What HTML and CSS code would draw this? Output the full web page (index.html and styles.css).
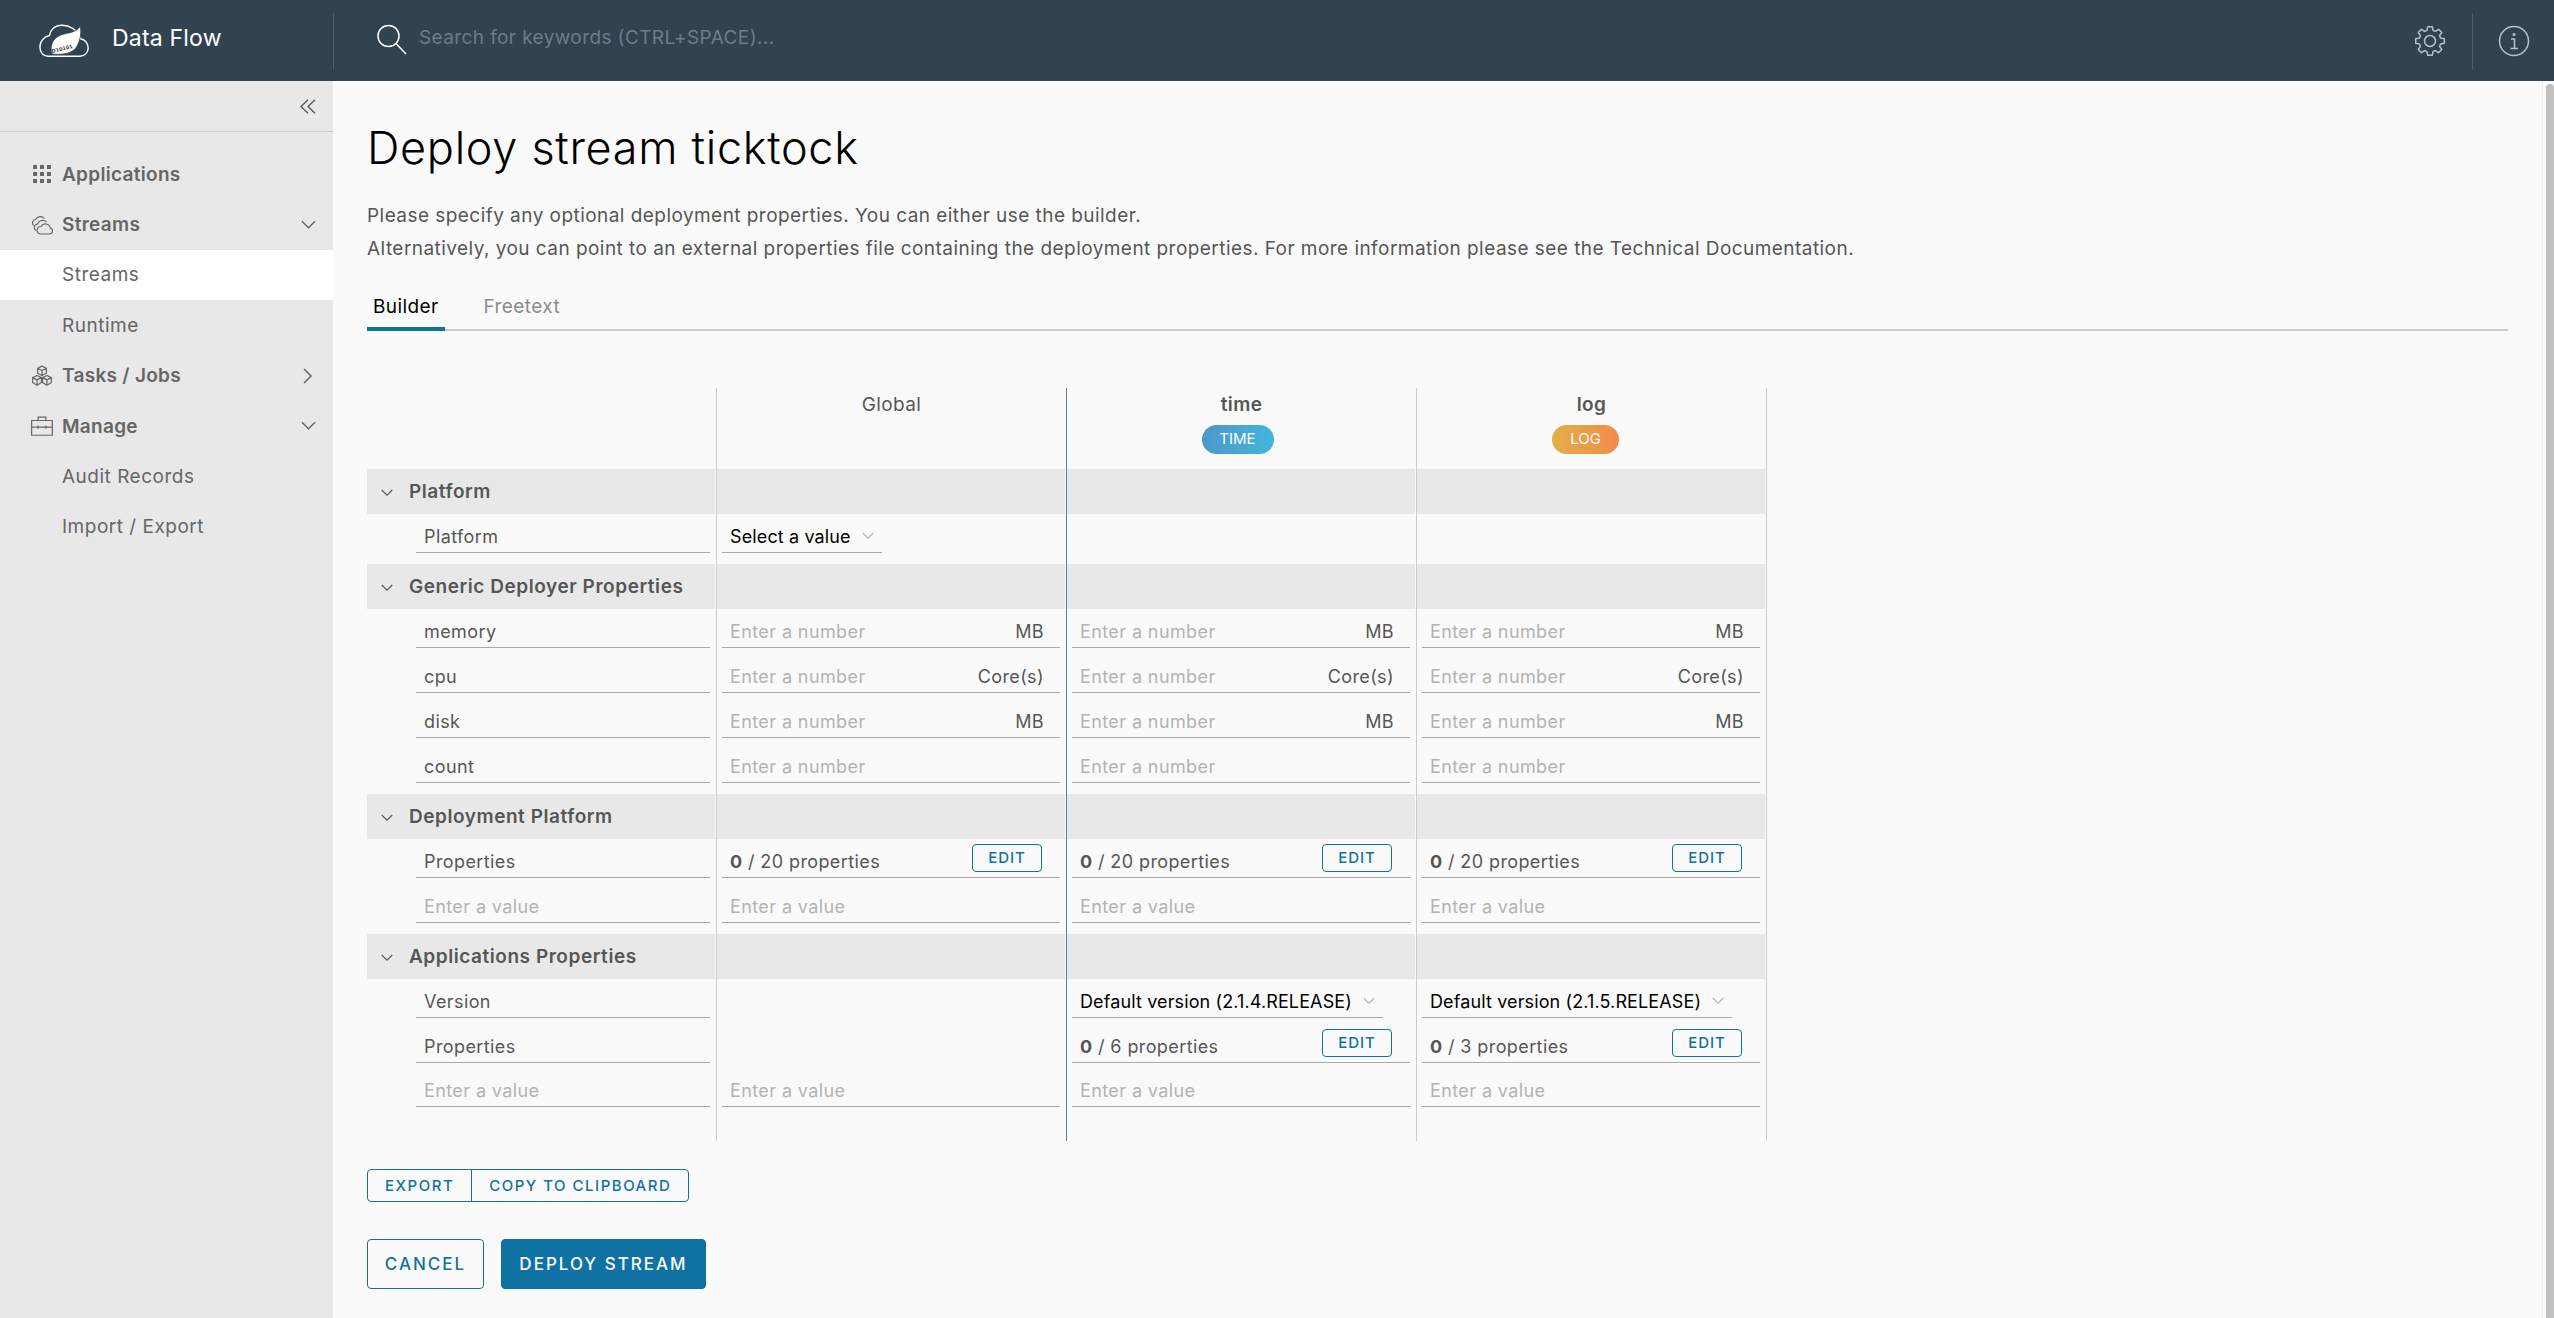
FILE: index.html
```html
<!DOCTYPE html>
<html lang="en" dir="ltr">

<head>
    <meta charset="utf-8">
    <title>Data Flow</title>
    <link rel="stylesheet" href="styles.css">
</head>

<body>
    <svg class="defs" width="0" height="0">
        <symbol id="chev-down" viewBox="0 0 16 10"><path d="M1 1l7 7 7-7" fill="none" stroke="currentColor" stroke-width="1.5"/></symbol>
        <symbol id="chev-right" viewBox="0 0 10 16"><path d="M1 1l7 7-7 7" fill="none" stroke="currentColor" stroke-width="1.5"/></symbol>
    </svg>

    <header class="topbar">
        <div class="brand">
            <svg class="logo" viewBox="0 0 50 33">
                <path d="M9 32.3H41C46 32.3 49.2 28 49.2 24C49.2 19 45.6 15.4 41.5 14.8C38 5 30 1 22.5 1.2C15.5 1.4 11.5 6 10.5 11.5C5 12.5.9 17.5.9 23C.9 28.5 4.5 32.3 9 32.3Z" fill="none" stroke="#fff" stroke-width="1.4"/>
                <path d="M41 2C38 10 25 8 18 13C12.5 17 11 24 13 30C23 31 33 30 37.5 23C41 17 43 9 41 2Z" fill="#fff" stroke="#314351" stroke-width=".8"/>
                <text class="logo-bits" x="13" y="29" transform="rotate(-14 13 29)">D10101</text>
            </svg>
            <span class="brand-name">Data Flow</span>
        </div>
        <div class="search">
            <svg class="search-icon" viewBox="0 0 30 30"><circle cx="11.5" cy="11.5" r="10.5" fill="none" stroke="#fff" stroke-width="1.5"/><path d="M19.5 19.5L29 29.5" stroke="#fff" stroke-width="1.5"/></svg>
            <span class="search-text">Search for keywords (CTRL+SPACE)...</span>
        </div>
        <button class="top-action">
            <svg class="gear" viewBox="0 0 32 32"><path d="M12.97 5.43L13.73 1.68H18.27L19.03 5.43L21.33 6.38L24.52 4.27L27.73 7.48L25.62 10.67L26.57 12.97L30.32 13.73V18.27L26.57 19.03L25.62 21.33L27.73 24.52L24.52 27.73L21.33 25.62L19.03 26.57L18.27 30.32H13.73L12.97 26.57L10.67 25.62L7.48 27.73L4.27 24.52L6.38 21.33L5.43 19.03L1.68 18.27V13.73L5.43 12.97L6.38 10.67L4.27 7.48L7.48 4.27L10.67 6.38Z" fill="none" stroke="#b9c0c5" stroke-width="1.5" stroke-linejoin="round"/><circle cx="16" cy="16" r="5.5" fill="none" stroke="#b9c0c5" stroke-width="1.5"/></svg>
        </button>
        <button class="top-action info">
            <svg class="info-icon" viewBox="0 0 32 32"><circle cx="16" cy="16" r="14.5" fill="none" stroke="#b9c0c5" stroke-width="1.5"/><circle cx="16" cy="9.5" r="1.5" fill="#b9c0c5"/><path d="M13 14h3.5v9M12.5 23.5h7.5" fill="none" stroke="#b9c0c5" stroke-width="1.5"/></svg>
        </button>
    </header>

    <div class="layout">
        <nav class="sidebar">
            <div class="collapse">
                <svg class="collapse-icon" viewBox="0 0 16 15"><path d="M8 .7L1 7.5l7 6.8M15 .7L8 7.5l7 6.8" fill="none" stroke="currentColor" stroke-width="1.3"/></svg>
            </div>
            <div class="nav">
                <a class="nav-item parent">
                    <svg class="nav-icon" viewBox="0 0 20 20"><path d="M1 1h4v4H1zM8 1h4v4H8zM15 1h4v4h-4zM1 8h4v4H1zM8 8h4v4H8zM15 8h4v4h-4zM1 15h4v4H1zM8 15h4v4H8zM15 15h4v4h-4z" fill="currentColor" transform="translate(1 1) scale(.9)"/></svg>
                    Applications
                </a>
                <a class="nav-item parent">
                    <svg class="nav-icon" viewBox="0 0 22 20"><g fill="none" stroke="currentColor" stroke-width="1.1"><path d="M9 19h9.5a3 3 0 0 0 .8-5.9A5 5 0 0 0 10 11.5a3.8 3.8 0 0 0-1 7.5z"/><path d="M5 15.5a3.5 3.5 0 0 1 1.5-6.5A5.5 5.5 0 0 1 15.5 7"/><path d="M2.5 10.5a3.5 3.5 0 0 1 2-6A5.5 5.5 0 0 1 13.5 3.5"/></g></svg>
                    Streams
                    <svg class="nav-chev" viewBox="0 0 16 10"><use href="#chev-down"/></svg>
                </a>
                <a class="nav-item child active">Streams</a>
                <a class="nav-item child">Runtime</a>
                <a class="nav-item parent">
                    <svg class="nav-icon" viewBox="0 0 20 20"><g fill="none" stroke="currentColor" stroke-width="1.1" stroke-linejoin="round"><path d="M10 1l4 2v4.500l-4 2-4-2V3zM6 3l4 2 4-2M10 5v4.500"/><path d="M5.500 9.500l4 2V16l-4 2.500-4-2.500v-4.500zM1.500 11.500l4 2 4-2M5.500 13.500v5"/><path d="M14.500 9.500l4 2V16l-4 2.500-4-2.500v-4.500zM10.500 11.500l4 2 4-2M14.500 13.500v5"/></g></svg>
                    Tasks / Jobs
                    <svg class="nav-chev right" viewBox="0 0 10 16"><use href="#chev-right"/></svg>
                </a>
                <a class="nav-item parent">
                    <svg class="nav-icon" viewBox="0 0 20 18"><g fill="none" stroke="currentColor" stroke-width="1.1"><path d="M.6 4h18.800v13.400H.6zM6.500 4V1h7v3M.6 10h6M13.400 10h6M6.500 8.500v3M13.500 8.500v3M6.500 10h7"/></g></svg>
                    Manage
                    <svg class="nav-chev" viewBox="0 0 16 10"><use href="#chev-down"/></svg>
                </a>
                <a class="nav-item child">Audit Records</a>
                <a class="nav-item child">Import / Export</a>
            </div>
        </nav>

        <main class="content">
            <h1>Deploy stream ticktock</h1>
            <p class="intro">Please specify any optional deployment properties. You can either use the builder.<br>Alternatively, you can point to an external properties file containing the deployment properties. For more information please see the Technical Documentation.</p>

            <div class="tabs">
                <a class="tab active">Builder</a>
                <a class="tab">Freetext</a>
            </div>

            <div class="grid">
                <div class="row head">
                    <div class="cell"></div>
                    <div class="cell"><div class="col-title">Global</div></div>
                    <div class="cell time-col"><div class="col-title strong">time</div><span class="badge source">TIME</span></div>
                    <div class="cell last-col"><div class="col-title strong">log</div><span class="badge sink">LOG</span></div>
                </div>

                <div class="row group">
                    <div class="cell"><svg class="group-chev"><use href="#chev-down"/></svg>Platform</div>
                    <div class="cell"></div>
                    <div class="cell time-col"></div>
                    <div class="cell last-col"></div>
                </div>
                <div class="row end">
                    <div class="cell name"><div class="field">Platform</div></div>
                    <div class="cell"><div class="field select"><span class="val">Select a value</span><svg class="caret" viewBox="0 0 16 10"><use href="#chev-down"/></svg></div></div>
                    <div class="cell time-col"></div>
                    <div class="cell last-col"></div>
                </div>

                <div class="row group">
                    <div class="cell"><svg class="group-chev"><use href="#chev-down"/></svg>Generic Deployer Properties</div>
                    <div class="cell"></div>
                    <div class="cell time-col"></div>
                    <div class="cell last-col"></div>
                </div>
                <div class="row">
                    <div class="cell name"><div class="field">memory</div></div>
                    <div class="cell"><div class="field"><span class="ph">Enter a number</span><span>MB</span></div></div>
                    <div class="cell time-col"><div class="field"><span class="ph">Enter a number</span><span>MB</span></div></div>
                    <div class="cell last-col"><div class="field"><span class="ph">Enter a number</span><span>MB</span></div></div>
                </div>
                <div class="row">
                    <div class="cell name"><div class="field">cpu</div></div>
                    <div class="cell"><div class="field"><span class="ph">Enter a number</span><span>Core(s)</span></div></div>
                    <div class="cell time-col"><div class="field"><span class="ph">Enter a number</span><span>Core(s)</span></div></div>
                    <div class="cell last-col"><div class="field"><span class="ph">Enter a number</span><span>Core(s)</span></div></div>
                </div>
                <div class="row">
                    <div class="cell name"><div class="field">disk</div></div>
                    <div class="cell"><div class="field"><span class="ph">Enter a number</span><span>MB</span></div></div>
                    <div class="cell time-col"><div class="field"><span class="ph">Enter a number</span><span>MB</span></div></div>
                    <div class="cell last-col"><div class="field"><span class="ph">Enter a number</span><span>MB</span></div></div>
                </div>
                <div class="row end">
                    <div class="cell name"><div class="field">count</div></div>
                    <div class="cell"><div class="field"><span class="ph">Enter a number</span></div></div>
                    <div class="cell time-col"><div class="field"><span class="ph">Enter a number</span></div></div>
                    <div class="cell last-col"><div class="field"><span class="ph">Enter a number</span></div></div>
                </div>

                <div class="row group">
                    <div class="cell"><svg class="group-chev"><use href="#chev-down"/></svg>Deployment Platform</div>
                    <div class="cell"></div>
                    <div class="cell time-col"></div>
                    <div class="cell last-col"></div>
                </div>
                <div class="row">
                    <div class="cell name"><div class="field">Properties</div></div>
                    <div class="cell"><div class="field"><span><b>0</b> / 20 properties</span><a class="btn-edit">EDIT</a></div></div>
                    <div class="cell time-col"><div class="field"><span><b>0</b> / 20 properties</span><a class="btn-edit">EDIT</a></div></div>
                    <div class="cell last-col"><div class="field"><span><b>0</b> / 20 properties</span><a class="btn-edit">EDIT</a></div></div>
                </div>
                <div class="row end">
                    <div class="cell name"><div class="field"><span class="ph">Enter a value</span></div></div>
                    <div class="cell"><div class="field"><span class="ph">Enter a value</span></div></div>
                    <div class="cell time-col"><div class="field"><span class="ph">Enter a value</span></div></div>
                    <div class="cell last-col"><div class="field"><span class="ph">Enter a value</span></div></div>
                </div>

                <div class="row group">
                    <div class="cell"><svg class="group-chev"><use href="#chev-down"/></svg>Applications Properties</div>
                    <div class="cell"></div>
                    <div class="cell time-col"></div>
                    <div class="cell last-col"></div>
                </div>
                <div class="row">
                    <div class="cell name"><div class="field">Version</div></div>
                    <div class="cell"></div>
                    <div class="cell time-col"><div class="field select"><span class="val">Default version (2.1.4.RELEASE)</span><svg class="caret" viewBox="0 0 16 10"><use href="#chev-down"/></svg></div></div>
                    <div class="cell last-col"><div class="field select"><span class="val">Default version (2.1.5.RELEASE)</span><svg class="caret" viewBox="0 0 16 10"><use href="#chev-down"/></svg></div></div>
                </div>
                <div class="row tight">
                    <div class="cell name"><div class="field">Properties</div></div>
                    <div class="cell"></div>
                    <div class="cell time-col"><div class="field"><span><b>0</b> / 6 properties</span><a class="btn-edit">EDIT</a></div></div>
                    <div class="cell last-col"><div class="field"><span><b>0</b> / 3 properties</span><a class="btn-edit">EDIT</a></div></div>
                </div>
                <div class="row foot">
                    <div class="cell name"><div class="field"><span class="ph">Enter a value</span></div></div>
                    <div class="cell"><div class="field"><span class="ph">Enter a value</span></div></div>
                    <div class="cell time-col"><div class="field"><span class="ph">Enter a value</span></div></div>
                    <div class="cell last-col"><div class="field"><span class="ph">Enter a value</span></div></div>
                </div>
            </div>

            <div class="btn-group">
                <a class="btn-small">EXPORT</a>
                <a class="btn-small">COPY TO CLIPBOARD</a>
            </div>

            <div class="actions">
                <a class="btn outline">CANCEL</a>
                <a class="btn primary">DEPLOY STREAM</a>
            </div>
        </main>

        <div class="scrollbar"><div class="thumb"></div></div>
    </div>
</body>

</html>
```

FILE: styles.css
```css
* {
    box-sizing: border-box;
}

html,
body {
    height: 100%;
}

body {
    margin: 0;
    overflow: hidden;
    color: #565656;
    background-color: #fafafa;
    font-family: Inter, "Liberation Sans", sans-serif;
    font-size: 18px;
}

.defs {
    position: absolute;
}

/* top bar */
.topbar {
    display: flex;
    align-items: center;
    height: 81px;
    background-color: #314351;
}

.brand {
    display: flex;
    align-items: center;
    width: 334px;
    height: 56px;
    padding-left: 39px;
    border-right: 1px solid #4f6170;
}

.logo {
    width: 50px;
    height: 33px;
}

.logo-bits {
    font-family: "DejaVu Sans", sans-serif;
    font-size: 5px;
    font-weight: 700;
    fill: #314351;
}

.brand-name {
    margin: 0 0 6px 23px;
    color: #fff;
    font-size: 23px;
    letter-spacing: .2px;
}

.search {
    display: flex;
    flex: 1;
    align-items: center;
    padding-left: 43px;
}

.search-icon {
    width: 30px;
    height: 31px;
    margin-bottom: 2px;
}

.search-text {
    margin: 0 0 6px 12px;
    color: #6d7c88;
    font-size: 19px;
    letter-spacing: .4px;
}

.top-action {
    display: flex;
    align-items: center;
    justify-content: center;
    width: 82px;
    height: 56px;
    padding: 0;
    border: 0;
    background: none;
}

.top-action.info {
    border-left: 1px solid #4f6170;
}

.gear {
    width: 32px;
    height: 32px;
    margin-right: 3px;
}

.info-icon {
    width: 32px;
    height: 32px;
}

/* page */
.layout {
    display: flex;
    height: calc(100% - 81px);
}

.sidebar {
    flex: none;
    width: 333px;
    background-color: #e8e8e8;
}

.collapse {
    display: flex;
    align-items: center;
    justify-content: flex-end;
    height: 51px;
    padding-right: 17px;
    border-bottom: 1px solid #ccc;
}

.collapse-icon {
    width: 16px;
    height: 15px;
    color: #565656;
}

.nav {
    padding-top: 17px;
}

.nav-item {
    display: flex;
    align-items: center;
    height: 50.4px;
    padding-left: 62px;
    color: #666;
    font-size: 19px;
    letter-spacing: .5px;
}

.nav-item.parent {
    position: relative;
    font-weight: 600;
    letter-spacing: .3px;
}

.nav-item.active {
    background-color: #fff;
}

.nav-icon {
    position: absolute;
    left: 31px;
    width: 22px;
    height: 22px;
}

.nav-chev {
    position: absolute;
    left: 301px;
    width: 15px;
    height: 10px;
}

.nav-chev.right {
    left: 303px;
    width: 10px;
    height: 16px;
}

.content {
    flex: 1;
    min-width: 0;
    padding: 42px 0 0 34px;
}

h1 {
    margin: 0;
    color: #000;
    font-size: 45px;
    font-weight: 300;
    letter-spacing: .7px;
    line-height: 50px;
}

.intro {
    margin: 26px 0 0;
    font-size: 19px;
    letter-spacing: .45px;
    line-height: 33px;
}

.tabs {
    display: flex;
    gap: 33px;
    height: 48px;
    margin-top: 18px;
    margin-right: 34px;
    border-bottom: 2px solid #ccc;
}

.tab {
    height: 48px;
    padding: 12px 6px 0;
    color: #8c8c8c;
    font-size: 19px;
    letter-spacing: .4px;
}

.tab.active {
    color: #000;
    border-bottom: 4px solid #0f72a2;
}

.grid {
    margin-top: 57px;
}

.row {
    display: grid;
    grid-template-columns: 349px 350px 350px 351px;
    height: 45px;
}

.row.end {
    height: 50px;
}

.row.tight {
    height: 44px;
}

.row.foot {
    height: 73px;
}

.row.head {
    height: 81px;
}

.cell {
    border-left: 1px solid #ccc;
}

.cell:first-child {
    border-left: 0;
}

.cell.time-col {
    border-left-color: #5f7d90;
}

.cell.last-col {
    border-right: 1px solid #ccc;
}

.col-title {
    padding-top: 6px;
    font-size: 19px;
    letter-spacing: .4px;
    line-height: 22px;
    text-align: center;
}

.col-title.strong {
    font-weight: 600;
}

.badge {
    display: block;
    height: 29px;
    margin: 9px auto 0;
    border-radius: 15px;
    color: #fff;
    font-size: 15px;
    line-height: 28px;
}

.badge.source {
    position: relative;
    left: -4px;
    width: 72px;
    background: linear-gradient(90deg, #4c98cb, #41b7d8);
    text-align: center;
}

.badge.sink {
    position: relative;
    left: -6px;
    width: 67px;
    background: linear-gradient(90deg, #e0b047, #f38b4b);
    text-align: center;
}

.group .cell {
    padding-right: 1px;
    background-color: #e8e8e8;
    background-clip: content-box;
}

.group .cell:first-child {
    display: flex;
    align-items: center;
    padding-left: 14px;
    font-size: 19px;
    font-weight: 600;
    letter-spacing: .55px;
    background-clip: border-box;
    border-right: 1px solid #fafafa;
}

.group-chev {
    flex: none;
    width: 12px;
    height: 8px;
    margin-right: 16px;
    margin-top: 3px;
    color: #565656;
}

.field {
    display: flex;
    align-items: center;
    justify-content: space-between;
    height: 39px;
    margin: 0 6px 0 5px;
    padding: 6px 18px 0 8px;
    border-bottom: 1px solid #a8a8a8;
    letter-spacing: .4px;
}

.field span + span {
    margin-right: -2px;
}

.name .field {
    margin-left: 49px;
    padding-left: 8px;
}

.field.select {
    justify-content: flex-start;
    width: fit-content;
    gap: 11px;
    padding-right: 8px;
}

.val {
    color: #000;
    letter-spacing: .12px;
}

.caret {
    width: 12px;
    height: 8px;
    color: #b3b3b3;
}

.ph {
    color: #b3b3b3;
}

.field b {
    font-weight: 700;
}

.btn-edit {
    display: block;
    width: 70px;
    height: 28px;
    margin-top: -6px;
    border: 1px solid #0f72a2;
    border-radius: 4px;
    color: #0f72a2;
    font-size: 15px;
    font-weight: 500;
    letter-spacing: 1px;
    line-height: 26px;
    text-align: center;
}

.btn-group {
    display: flex;
    width: fit-content;
    height: 33px;
    margin-top: 28px;
    border: 1px solid #0f72a2;
    border-radius: 4px;
}

.btn-small {
    padding: 0 17px;
    color: #0f72a2;
    font-size: 15px;
    font-weight: 500;
    letter-spacing: 1.5px;
    line-height: 31px;
}

.btn-small + .btn-small {
    border-left: 1px solid #0f72a2;
}

.actions {
    display: flex;
    gap: 17px;
    margin-top: 37px;
}

.btn {
    height: 50px;
    border: 1px solid #0f72a2;
    border-radius: 4px;
    color: #0f72a2;
    font-size: 17px;
    font-weight: 500;
    letter-spacing: 2px;
    line-height: 48px;
    text-align: center;
}

.btn.outline {
    width: 117px;
}

.btn.primary {
    width: 205px;
    color: #fff;
    background-color: #0f72a2;
}

.scrollbar {
    flex: none;
    width: 12px;
    padding: 3px 0 0 3px;
    border-left: 1px solid #eee;
}

.thumb {
    height: 100%;
    border-radius: 4px 4px 0 0;
    background-color: #c0c0c0;
}
```
